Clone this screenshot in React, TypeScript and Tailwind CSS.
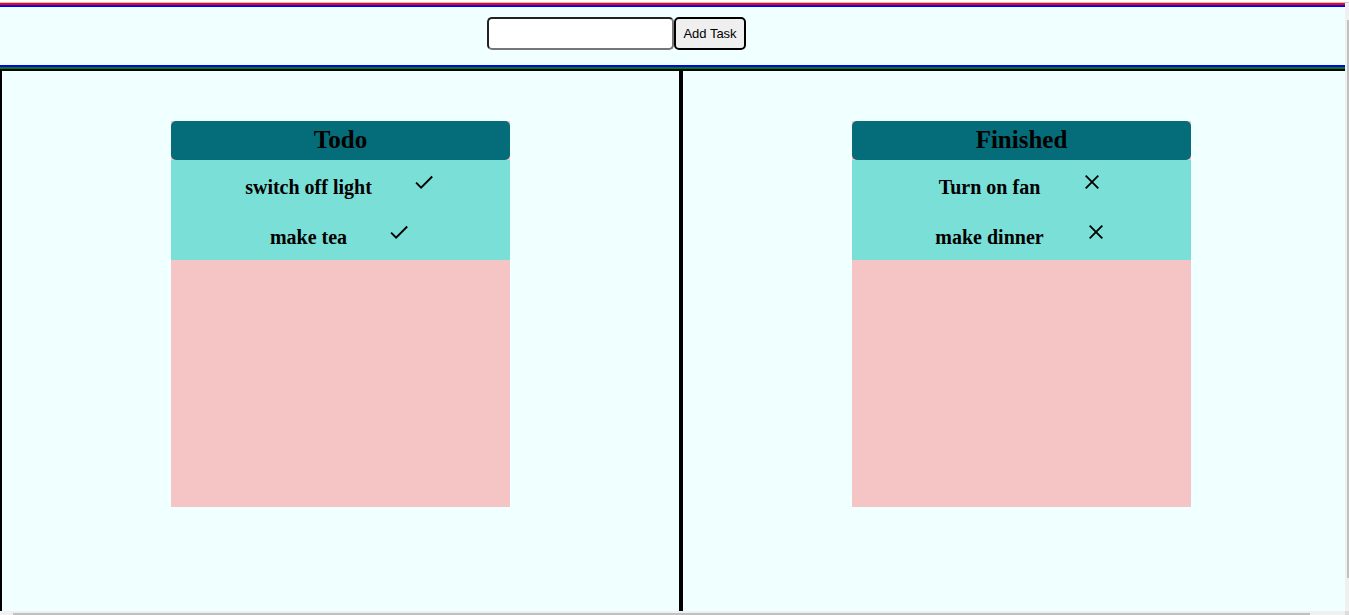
import { useState } from "react";
import type { FormEvent } from "react";

type Task = { id: number; name: string; done: boolean };

const initialTasks: Task[] = [
  { id: 1, name: "switch off light", done: false },
  { id: 2, name: "make tea", done: false },
  { id: 3, name: "Turn on fan", done: true },
  { id: 4, name: "make dinner", done: true },
];

type ColumnProps = {
  title: string;
  tasks: Task[];
  onToggle: (id: number) => void;
};

function CheckIcon() {
  return (
    <svg viewBox="0 0 24 24" className="size-6" fill="none" stroke="currentColor" strokeWidth="1.9" aria-hidden="true">
      <path d="M4.1 12.6l5 5L20.2 6.5" />
    </svg>
  );
}

function CloseIcon() {
  return (
    <svg viewBox="0 0 24 24" className="size-6" fill="none" stroke="currentColor" strokeWidth="1.8" aria-hidden="true">
      <path d="M5.7 5.7l12.6 12.6M18.3 5.7L5.7 18.3" />
    </svg>
  );
}

function Column({ title, tasks, onToggle }: ColumnProps) {
  return (
    <section className="flex flex-1 justify-center border-x-2 border-black pt-[50px]">
      <div className="h-[386px] w-1/2 bg-[#f5c4c4]">
        <h2 className="rounded-[5px] bg-[#056d79] pb-0.5 text-center text-[25px] leading-[37px] font-bold">
          {title}
        </h2>
        <ul className="bg-[#7adfd6]">
          {tasks.map((task) => (
            <li key={task.id} className="flex h-[50px] items-start justify-center gap-10 pt-2.5">
              <span className="text-xl leading-[35px] font-bold">{task.name}</span>
              <button
                type="button"
                aria-label={task.done ? "Move back to todo" : "Mark as finished"}
                onClick={() => onToggle(task.id)}
                className="cursor-pointer"
              >
                {task.done ? <CloseIcon /> : <CheckIcon />}
              </button>
            </li>
          ))}
        </ul>
      </div>
    </section>
  );
}

export default function App() {
  const [tasks, setTasks] = useState(initialTasks);
  const [draft, setDraft] = useState("");

  const addTask = (event: FormEvent) => {
    event.preventDefault();
    if (!draft.trim()) return;
    setTasks([...tasks, { id: Date.now(), name: draft.trim(), done: false }]);
    setDraft("");
  };

  const toggle = (id: number) =>
    setTasks(tasks.map((task) => (task.id === id ? { ...task, done: !task.done } : task)));

  return (
    <div className="flex h-screen flex-col bg-white font-['Liberation_Serif',serif] text-black">
      <div className="mt-0.5 h-px shrink-0 bg-[#c8c8c8]" />
      <div className="grid min-h-0 flex-1 grid-cols-[minmax(0,1fr)_4px] grid-rows-[minmax(0,1fr)_4px]">
        <div className="overflow-hidden bg-[#f0ffff]">
          <div className="flex h-full w-[calc(100%+17px)] flex-col">
            <div className="border-y-2 border-t-[red] border-b-[green]">
              <form
                onSubmit={addTask}
                className="flex h-[62px] items-start justify-center border-y-2 border-[blue] pt-2.5 pr-[129px]"
              >
                <input
                  type="text"
                  aria-label="New task"
                  value={draft}
                  onChange={(event) => setDraft(event.target.value)}
                  className="h-[33px] w-[187px] rounded-[5px] border-2 border-t-[#222] border-r-[#767676] border-b-[#767676] border-l-[#222] bg-white px-1 font-['Liberation_Sans',sans-serif] text-[13px]"
                />
                <button
                  type="submit"
                  className="h-[33px] w-[72px] rounded-[5px] border-2 border-black bg-[#efefef] font-['Liberation_Sans',sans-serif] text-[13px] whitespace-nowrap"
                >
                  Add Task
                </button>
              </form>
            </div>
            <main className="flex flex-1 border-t-2 border-black">
              <Column title="Todo" tasks={tasks.filter((task) => !task.done)} onToggle={toggle} />
              <Column title="Finished" tasks={tasks.filter((task) => task.done)} onToggle={toggle} />
            </main>
          </div>
        </div>
        <div className="bg-[#f0f0f0] pt-[17px] pl-0.5">
          <div className="h-[94.4%] bg-[#c1c1c1]" />
        </div>
        <div className="bg-[#f0f0f0] pt-0.5 pl-[13px]">
          <div className="h-full w-[97.4%] bg-[#c1c1c1]" />
        </div>
        <div className="bg-[#dcdcdc]" />
      </div>
    </div>
  );
}
